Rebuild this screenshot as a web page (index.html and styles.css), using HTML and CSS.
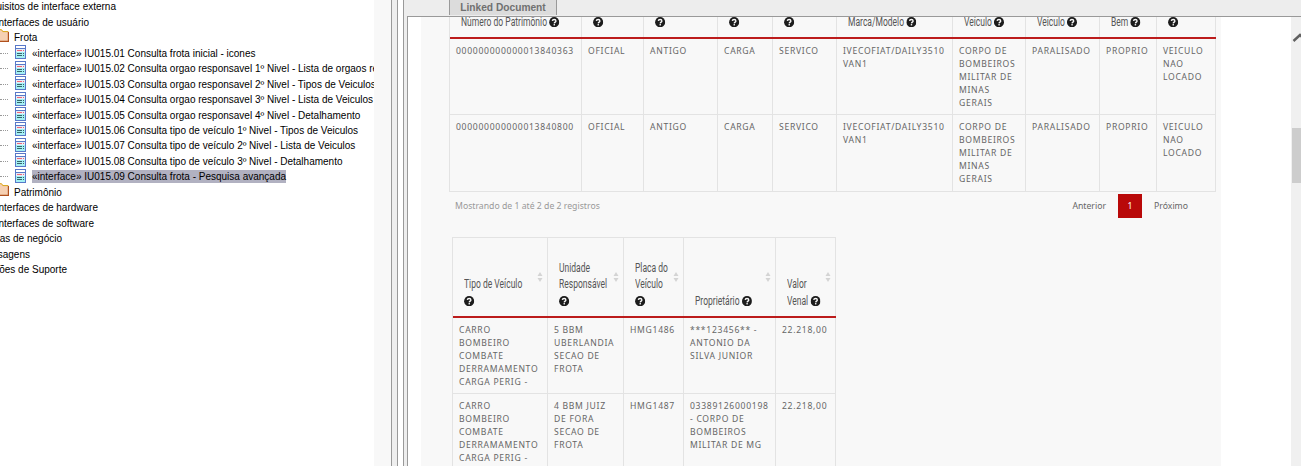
FILE: index.html
```
<!DOCTYPE html>
<html lang="pt-BR">
<head>
<meta charset="utf-8">
<title>Linked Document</title>
<link rel="stylesheet" href="styles.css">
</head>
<body>
<svg width="0" height="0" class="defs">
  <symbol id="help" viewBox="0 0 10 10" preserveAspectRatio="none"><circle cx="5" cy="5" r="4.9" fill="#1c1c1c"/><path d="M3.2 3.7C3.4 1.9 6.7 1.9 6.7 3.8C6.7 4.9 5.2 4.9 5.1 6.1" fill="none" stroke="#f8f8f8" stroke-width="1.3"/><rect x="4.4" y="6.8" width="1.4" height="1.3" fill="#f8f8f8"/></symbol>
  <symbol id="form" viewBox="0 0 11 14"><rect x=".5" y=".5" width="10" height="13" fill="#a5f0f4" stroke="#5878c8"/><rect x="1" y="1" width="9" height="2" fill="#fff"/><path d="M0 3.5H11" stroke="#5878c8"/><rect x="1" y="4" width="9" height="3" fill="#e6eef8"/><path d="M2 5.5H7M8 5.5H9" stroke="#ef6677"/><path d="M2 8.5H7M8 8.5H9M2 10.5H7M8 10.5H9" stroke="#35666c"/></symbol>
  <symbol id="folder" viewBox="0 0 9 13"><path d="M0 .7H2L3 2.5H8.3V12.2H0" fill="#f6d0b2"/><path d="M0 .7H1.5L2.8 2.6H8.3" fill="none" stroke="#d9a414"/><path d="M8.4 3V12.3H0" fill="none" stroke="#b0501d" stroke-width="1.2"/></symbol>
  <symbol id="sort" viewBox="0 0 6 10"><path d="M3 0L5.5 4H.5ZM3 10L5.5 6H.5Z" fill="#d4d4d4"/></symbol>
</svg>
<div class="app">
  <nav class="tree">
    <div class="row cut w115"><span>uisitos de interface externa</span></div>
    <div class="row cut w89"><span>Interfaces de usuário</span></div>
    <div class="row dir"><svg class="folder"><use href="#folder"/></svg><span>Frota</span></div>
    <div class="row leaf"><svg class="form"><use href="#form"/></svg><span>«interface» IU015.01 Consulta frota inicial - icones</span></div>
    <div class="row leaf"><svg class="form"><use href="#form"/></svg><span>«interface» IU015.02 Consulta orgao responsavel 1º Nivel - Lista de orgaos re</span></div>
    <div class="row leaf"><svg class="form"><use href="#form"/></svg><span>«interface» IU015.03 Consulta orgao responsavel 2º Nivel - Tipos de Veiculos</span></div>
    <div class="row leaf"><svg class="form"><use href="#form"/></svg><span>«interface» IU015.04 Consulta orgao responsavel 3º Nivel - Lista de Veiculos</span></div>
    <div class="row leaf"><svg class="form"><use href="#form"/></svg><span>«interface» IU015.05 Consulta orgao responsavel 4º Nivel - Detalhamento</span></div>
    <div class="row leaf"><svg class="form"><use href="#form"/></svg><span>«interface» IU015.06 Consulta tipo de veículo 1º Nivel - Tipos de Veiculos</span></div>
    <div class="row leaf"><svg class="form"><use href="#form"/></svg><span>«interface» IU015.07 Consulta tipo de veículo 2º Nivel - Lista de Veiculos</span></div>
    <div class="row leaf"><svg class="form"><use href="#form"/></svg><span>«interface» IU015.08 Consulta tipo de veículo 3º Nivel - Detalhamento</span></div>
    <div class="row leaf"><svg class="form"><use href="#form"/></svg><span class="selected">«interface» IU015.09 Consulta frota - Pesquisa avançada</span></div>
    <div class="row dir"><svg class="folder"><use href="#folder"/></svg><span>Patrimônio</span></div>
    <div class="row cut w98"><span>Interfaces de hardware</span></div>
    <div class="row cut w94"><span>Interfaces de software</span></div>
    <div class="row cut w62"><span>as de negócio</span></div>
    <div class="row cut w30"><span>sagens</span></div>
    <div class="row cut w67"><span>ões de Suporte</span></div>
  </nav>
  <div class="gutter"></div>
  <div class="splitter"></div>
  <main class="pane">
    <div class="tabs"><div class="tab">Linked Document</div></div>
    <div class="view">
      <div class="doc">
        <section class="grid wide">
          <div class="th"><p>Número do Patrimônio <svg><use href="#help"/></svg></p></div>
          <div class="th"><p><svg><use href="#help"/></svg></p></div>
          <div class="th"><p><svg><use href="#help"/></svg></p></div>
          <div class="th"><p><svg><use href="#help"/></svg></p></div>
          <div class="th"><p><svg><use href="#help"/></svg></p></div>
          <div class="th"><p>Marca/Modelo <svg><use href="#help"/></svg></p></div>
          <div class="th"><p>Veículo <svg><use href="#help"/></svg></p></div>
          <div class="th"><p>Veículo <svg><use href="#help"/></svg></p></div>
          <div class="th"><p>Bem <svg><use href="#help"/></svg></p></div>
          <div class="th"><p><svg><use href="#help"/></svg></p></div>
          <div class="td">000000000000013840363</div><div class="td">OFICIAL</div><div class="td">ANTIGO</div><div class="td">CARGA</div><div class="td">SERVICO</div><div class="td">IVECOFIAT/DAILY3510<br>VAN1</div><div class="td">CORPO DE<br>BOMBEIROS<br>MILITAR DE<br>MINAS<br>GERAIS</div><div class="td">PARALISADO</div><div class="td">PROPRIO</div><div class="td">VEICULO<br>NAO<br>LOCADO</div>
          <div class="td">000000000000013840800</div><div class="td">OFICIAL</div><div class="td">ANTIGO</div><div class="td">CARGA</div><div class="td">SERVICO</div><div class="td">IVECOFIAT/DAILY3510<br>VAN1</div><div class="td">CORPO DE<br>BOMBEIROS<br>MILITAR DE<br>MINAS<br>GERAIS</div><div class="td">PARALISADO</div><div class="td">PROPRIO</div><div class="td">VEICULO<br>NAO<br>LOCADO</div>
        </section>
        <div class="footer"><span class="info">Mostrando de 1 até 2 de 2 registros</span><span>Anterior</span><span class="page">1</span><span>Próximo</span></div>
        <section class="grid narrow">
          <div class="th"><p>Tipo de Veículo<br><svg><use href="#help"/></svg></p><svg class="sort"><use href="#sort"/></svg></div>
          <div class="th"><p>Unidade<br>Responsável<br><svg><use href="#help"/></svg></p><svg class="sort"><use href="#sort"/></svg></div>
          <div class="th"><p>Placa do<br>Veículo<br><svg><use href="#help"/></svg></p><svg class="sort"><use href="#sort"/></svg></div>
          <div class="th"><p>Proprietário <svg><use href="#help"/></svg></p><svg class="sort"><use href="#sort"/></svg></div>
          <div class="th"><p>Valor<br>Venal <svg><use href="#help"/></svg></p><svg class="sort"><use href="#sort"/></svg></div>
          <div class="td">CARRO<br>BOMBEIRO<br>COMBATE<br>DERRAMAMENTO<br>CARGA PERIG -</div><div class="td">5 BBM<br>UBERLANDIA<br>SECAO DE<br>FROTA</div><div class="td">HMG1486</div><div class="td">***123456** -<br>ANTONIO DA<br>SILVA JUNIOR</div><div class="td">22.218,00</div>
          <div class="td">CARRO<br>BOMBEIRO<br>COMBATE<br>DERRAMAMENTO<br>CARGA PERIG -</div><div class="td">4 BBM JUIZ<br>DE FORA<br>SECAO DE<br>FROTA</div><div class="td">HMG1487</div><div class="td">03389126000198<br>- CORPO DE<br>BOMBEIROS<br>MILITAR DE MG</div><div class="td">22.218,00</div>
        </section>
      </div>
      <div class="scrollbar"><svg class="up" viewBox="0 0 10 10"><path d="M2.5 8L9 2L15 8" fill="none" stroke="#606060" stroke-width="2.4"/></svg><div class="thumb"></div></div>
    </div>
  </main>
</div>
</body>
</html>
```
FILE: styles.css
```
* { box-sizing: border-box; }
body { margin: 0; overflow: hidden; background: #fff; }
.defs { position: absolute; }
.app { display: flex; width: 1301px; height: 466px; overflow: hidden; }

/* project tree */
.tree { width: 374px; flex: none; overflow: hidden; margin-top: -1px; font: 10px/13px "Liberation Sans", Arial, sans-serif; color: #000; }
.row { display: flex; align-items: center; height: 15.47px; white-space: nowrap; }
.row span { flex: none; }
.cut { justify-content: flex-end; }
.w115 { width: 116px; }
.w89 { width: 89px; }
.w98 { width: 98px; }
.w94 { width: 94px; }
.w62 { width: 62px; }
.w30 { width: 30px; }
.w67 { width: 67px; }
.folder { width: 9px; height: 13px; flex: none; margin: -5px 5px 0 0; }
.leaf::before { content: ""; width: 8px; border-top: 1px dotted #999; margin-right: 7px; flex: none; }
.form { width: 11px; height: 14px; flex: none; margin: -2px 6px 0 0; }
.selected { background: #b1b1c1; }
.gutter { width: 17px; flex: none; background: #f8f8f8; }
.splitter { width: 13px; flex: none; background: linear-gradient(90deg, #999 0 1px, #eee 1px 6px, #999 6px 7px, #fff 7px 12px, #999 12px 13px); }

/* document pane */
.pane { flex: 1; display: flex; flex-direction: column; padding-left: 3px; background: #ededed; min-width: 0; }
.tabs { height: 16px; flex: none; padding-left: 42px; }
.tab { width: 108px; height: 15px; background: #dcdcdc; border: solid #999; border-width: 0 1px; color: #707070; font: bold 10.2px/15px "Liberation Sans", Arial, sans-serif; text-align: center; white-space: nowrap; }
.view { flex: 1; display: flex; justify-content: space-between; min-height: 0; border: solid #999; border-width: 1px 0 0 1px; background: #fff; padding-left: 13px; }
.doc { width: 800px; background: #f8f8f8; padding-left: 28px; overflow: hidden; font-family: "Noto Sans", sans-serif; color: #666; }
.grid { display: grid; border-left: 1px solid #e3e3e3; }
.wide { width: 767px; grid-template-columns: 132px 62px 74px 55px 64px 116px 73px 74px 57px 59px; grid-template-rows: 22px 76px 77px; }
.narrow { width: 384px; margin: 17px 0 0 3px; border-top: 1px solid #e3e3e3; grid-template-columns: 95px 76px 60px 92px 60px; grid-template-rows: 80px 76px 76px; }
.td { border: solid #e3e3e3; border-width: 0 1px 1px 0; padding: 6px 0 0 6px; font-size: 8.6px; line-height: 13.1px; letter-spacing: .7px; white-space: nowrap; }
.th { position: relative; display: flex; align-items: flex-end; box-shadow: inset -1px 0 #e3e3e3; border-bottom: 2px solid #bc1c1c; padding: 0 0 7px 11px; white-space: nowrap; }
.th p { margin: 0; font: 12px/16.4px Roboto, sans-serif; color: #555; transform: scaleX(.71); transform-origin: left; }
.th p svg { width: 14.5px; height: 10.4px; vertical-align: -1.5px; }
.sort { position: absolute; right: 5px; top: 34px; width: 6px; height: 10px; }
.footer { display: flex; align-items: center; height: 28px; width: 767px; padding: 0 28px 1px 6px; font-size: 8.7px; gap: 12px; }
.info { margin-right: auto; color: #999; }
.page { width: 24px; height: 24px; background: #b90909; color: #fff; line-height: 24px; text-align: center; }
.scrollbar { width: 10px; flex: none; background: #f0f0f0; }
.up { display: block; width: 10px; height: 10px; margin: 16px 0 85px 0; }
.thumb { height: 55px; margin-left: 1px; background: #cdcdcd; }
```
